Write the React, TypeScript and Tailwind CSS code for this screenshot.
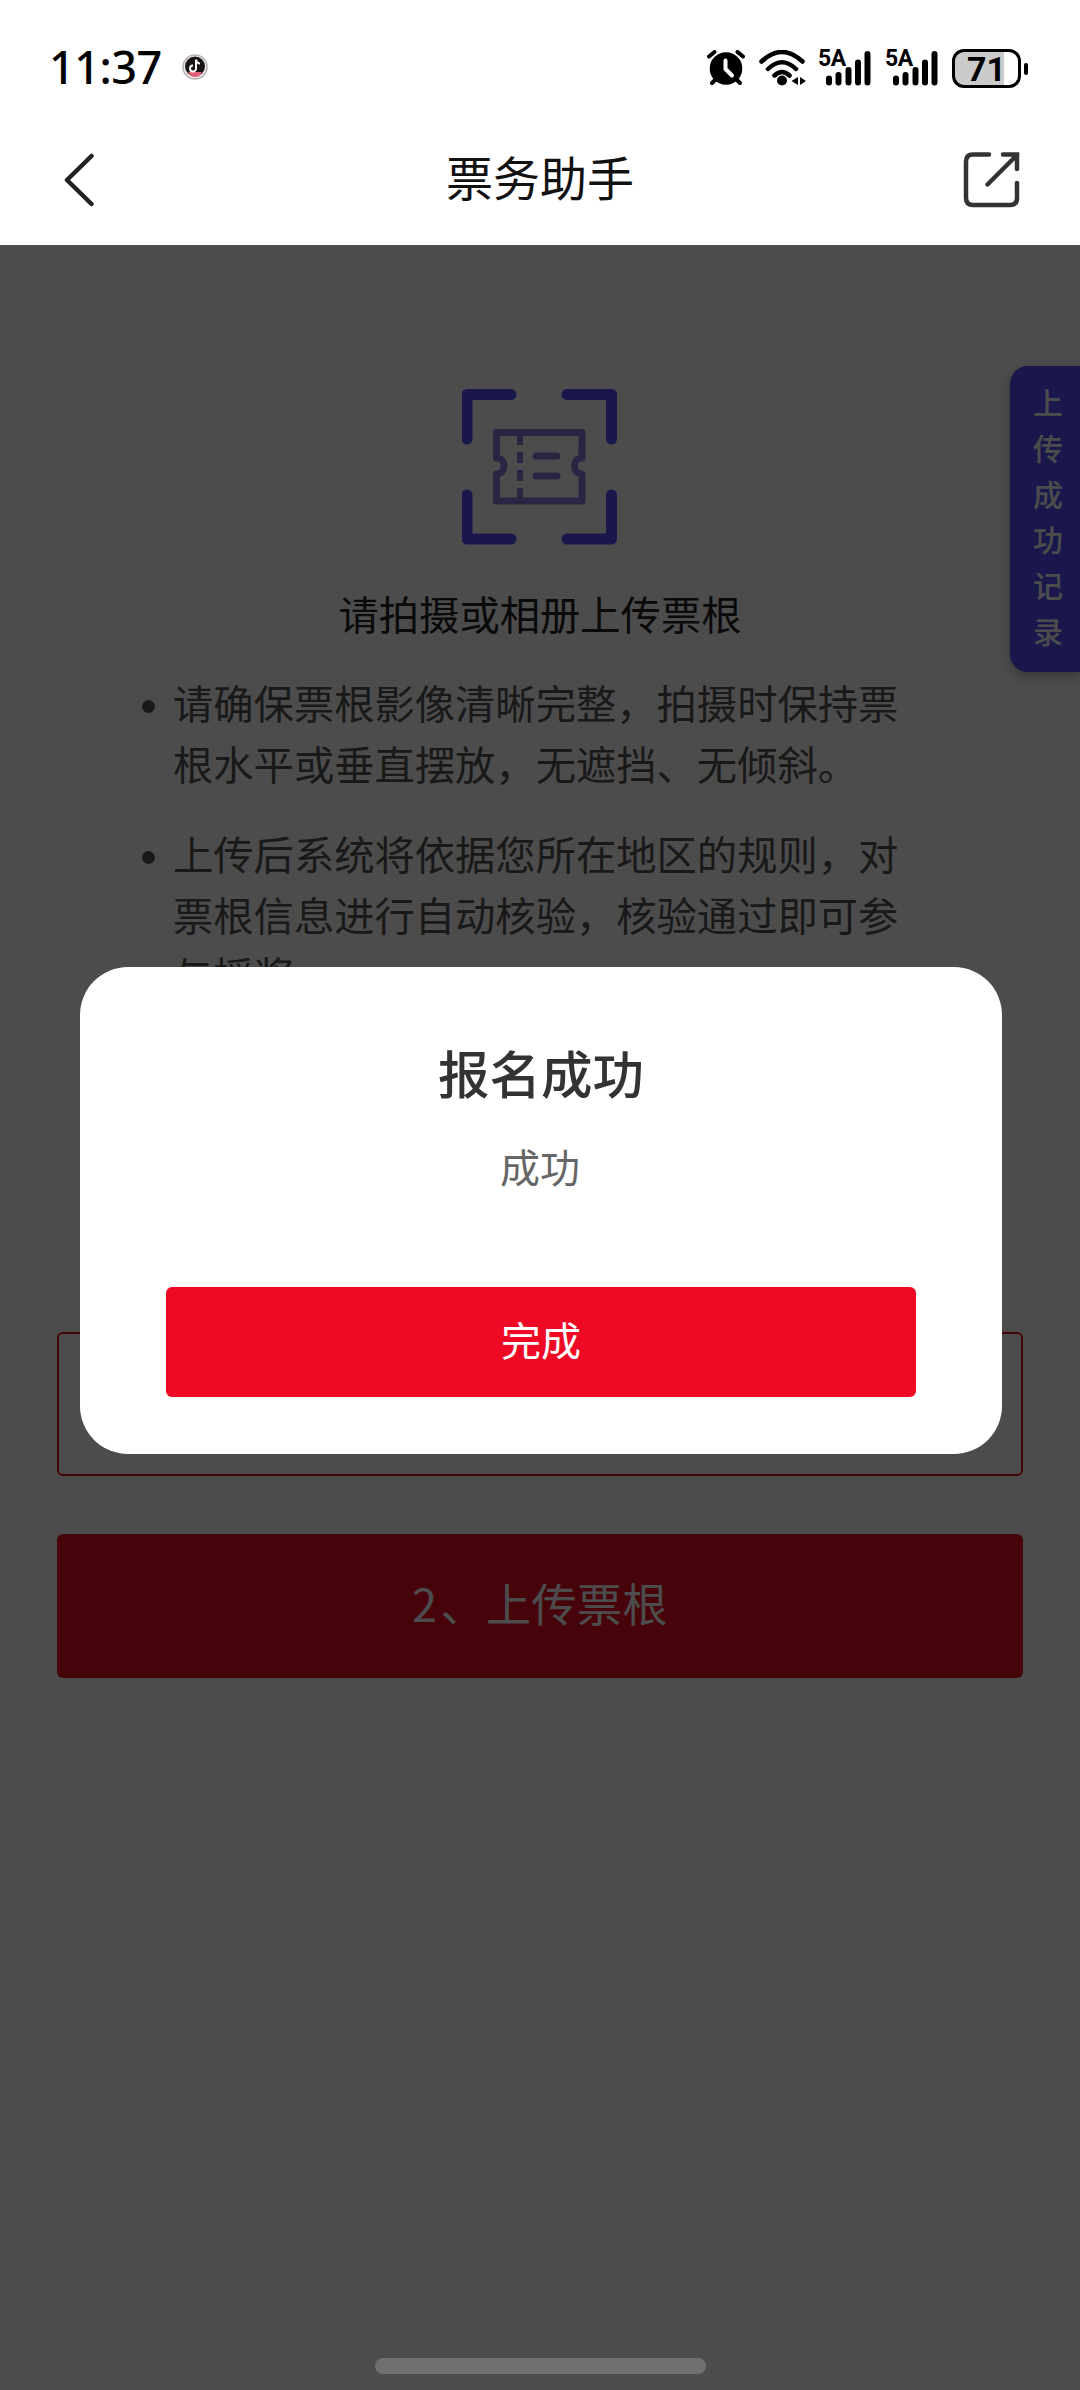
import React from 'react';

const cjk = "font-['Noto_Sans_CJK_SC',sans-serif]";

function Signal() {
  return (
    <div className="relative h-[36px] w-[53px]">
      <span className="absolute top-0 left-[-1px] font-['Roboto',sans-serif] text-[23px] leading-[18px] font-bold tracking-[-0.5px]">5A</span>
      <svg viewBox="0 0 53 36" className="absolute inset-0 h-[36px] w-[53px]" stroke="#000" strokeWidth="6" strokeLinecap="round">
        <path d="M10 28.500V32.500M19.500 25V32.500M29.500 20V32.500M39 12.500V32.500M48.500 4V32.500" />
      </svg>
    </div>
  );
}

function StatusBar() {
  return (
    <div className="flex h-[120px] items-start text-black">
      <div className="ml-[49px] mt-[44px] w-[119px] font-['Noto_Sans',sans-serif] text-[45px] leading-[46px] font-medium tracking-[-0.500px] whitespace-nowrap">11:37</div>
      <svg viewBox="0 0 26 26" className="mt-[54px] ml-[14px] h-[26px] w-[26px]">
        <circle cx="13" cy="13" r="12" fill="#eee" stroke="#b5b0b1" strokeWidth="1.500" />
        <circle cx="13" cy="12.500" r="10" fill="#171316" />
        <path d="M6 18H20Q18 23 13 23T6 18Z" fill="#e0607a" />
        <path d="M14 5.500V14.500A3 3 0 1 1 11 11.500M14 6Q15 9.500 18 9.500" fill="none" stroke="#fff" strokeWidth="2" />
      </svg>
      <svg viewBox="0 0 38 36" className="mt-[50px] ml-[499px] h-[36px] w-[38px]">
        <path d="M2 6.500 7.500 2M30.500 2 36 6.500" stroke="#000" strokeWidth="4" strokeLinecap="round" />
        <path d="M8 30 5 33M30 30 33 33" stroke="#000" strokeWidth="4" strokeLinecap="round" />
        <circle cx="19" cy="18.500" r="16.300" fill="#000" />
        <path d="M18.500 10.500V19L25 25.500" fill="none" stroke="#fff" strokeWidth="4" strokeLinecap="round" strokeLinejoin="round" />
      </svg>
      <svg viewBox="0 0 48 36" className="mt-[50px] ml-[14px] h-[36px] w-[48px]" fill="none" stroke="#000" strokeWidth="4.500" strokeLinecap="round">
        <path d="M2.500 11.500Q23 -7.500 43.500 11.500M9 19Q23 5.500 37 19M15.500 25.500Q23 18.500 30.500 25.500" />
        <circle cx="23" cy="30.500" r="5" fill="#000" stroke="none" />
        <path d="M39 27V35L32.500 31ZM41 27 47 31 41 35Z" fill="#000" stroke="none" />
      </svg>
      <div className="mt-[50px] ml-[12px] flex gap-[14px]">
        <Signal />
        <Signal />
      </div>
      <div className="mt-[49px] ml-[13px] flex items-center">
        <div className="flex h-[39px] w-[69px] items-center justify-center rounded-[12px] border-[3px] border-black bg-[linear-gradient(90deg,#cbcbcb_77%,#fff_77%)] font-['Roboto',sans-serif] text-[34px] leading-none font-bold">71</div>
        <div className="ml-[3px] h-[12px] w-[4px] rounded-full bg-black" />
      </div>
    </div>
  );
}

function NavBar() {
  return (
    <div className="flex h-[125px] items-start justify-between">
      <svg viewBox="0 0 30 54" className="mt-[33px] ml-[64px] h-[54px] w-[30px]" fill="none" stroke="#222" strokeWidth="4.500" strokeLinecap="round">
        <path d="M27.500 3 3 27 27.500 51" strokeLinejoin="round" />
      </svg>
      <h1 className="mt-[21px] ml-[24px] text-[47px] leading-[70px] font-normal text-[#111]">票务助手</h1>
      <svg viewBox="0 0 58 58" className="mt-[31px] mr-[60px] h-[58px] w-[58px]" fill="none" stroke="#333" strokeWidth="4.500" strokeLinecap="round">
        <path d="M27 3.500H11Q4 3.500 4 10.500V47Q4 54 11 54H48Q55 54 55 47V32" />
        <path d="M25.500 33.500 54 5M41 3.500H55V18" />
      </svg>
    </div>
  );
}

function TicketScanIcon() {
  return (
    <svg viewBox="0 0 156 156" className="mx-auto h-[156px] w-[156px]" fill="none">
      <path d="M49 5.500H5V50M105 5.500H149.500V50M5 106V150H49M105 150H149.500V106" stroke="#564fff" strokeWidth="11" strokeLinecap="round" strokeLinejoin="round" />
      <g stroke="#8a80df" strokeWidth="7">
        <path d="M34.500 43.500H120V69C110 69 110 85 120 85V112H34.500V85C44.500 85 44.500 69 34.500 69Z" strokeLinejoin="round" />
        <path d="M58 46V56M58 63V74M58 81V92M58 99V110" strokeWidth="6" />
        <path d="M74 67H95M74 87H95" strokeLinecap="round" />
      </g>
    </svg>
  );
}

function Rule({ children }: { children: React.ReactNode }) {
  return (
    <li className="mb-[30.300px] flex">
      <span className="mt-[28px] mr-[18px] h-[13px] w-[13px] shrink-0 rounded-full bg-[#555]" />
      <span>{children}</span>
    </li>
  );
}

export default function App() {
  return (
    <div className={`${cjk} h-[2390px] w-[1080px] overflow-hidden bg-white`} lang="zh-CN">
      <StatusBar />
      <NavBar />
      <main className="relative h-[2145px] overflow-hidden bg-white px-[57px] pt-[71px]">
        <section className="h-[930px] rounded-[12px] bg-white pt-[73px] shadow-[0_0_16px_rgba(0,0,0,0.05)]">
          <TicketScanIcon />
          <h2 className="mt-[38px] text-center text-[40.300px] leading-[60px] font-normal text-[#222]">请拍摄或相册上传票根</h2>
          <ul className="mt-[29px] ml-[85px] text-[40.300px] leading-[60.500px] whitespace-nowrap text-[#555]">
            <Rule>请确保票根影像清晰完整，拍摄时保持票<br />根水平或垂直摆放，无遮挡、无倾斜。</Rule>
            <Rule>上传后系统将依据您所在地区的规则，对<br />票根信息进行自动核验，核验通过即可参<br />与摇奖。</Rule>
          </ul>
        </section>
        <div className="mt-[86px] h-[144px] rounded-[6px] border-2 border-[#ee0a24]" />
        <button className="mt-[58px] flex h-[144px] w-full items-center justify-center rounded-[6px] bg-[#ee0a24] pb-[7px] text-[45px] tracking-[0.500px] text-white"><span className="mr-[3px]">2</span>、上传票根</button>
        <aside className="absolute top-[121px] right-0 flex h-[306px] w-[70px] flex-col items-center rounded-l-[18px] bg-[#574dff] pt-[13px] pl-[6px] text-[30px] leading-[45.800px] font-medium text-white shadow-[0_4px_12px_rgba(0,0,0,0.3)]">
          {[...'上传成功记录'].map((c) => <span key={c}>{c}</span>)}
        </aside>
        <div className="absolute inset-0 bg-black/70" />
        <div role="dialog" className="absolute top-[722px] left-[80px] flex h-[487px] w-[922px] flex-col items-center rounded-[48px] bg-white">
          <h3 className="mt-[67px] text-[51.500px] leading-[76px] font-medium text-[#333]">报名成功</h3>
          <p className="mt-[26px] mr-[2px] text-[40px] leading-[60px] text-[#666]">成功</p>
          <button className="mt-[91px] flex h-[110px] w-[750px] items-center justify-center rounded-[6px] bg-[#ee0a24] pb-[7px] text-[40px] text-white">完成</button>
        </div>
        <div className="absolute bottom-[16px] left-[375px] h-[16px] w-[331px] rounded-full bg-[#707070]" />
      </main>
    </div>
  );
}
